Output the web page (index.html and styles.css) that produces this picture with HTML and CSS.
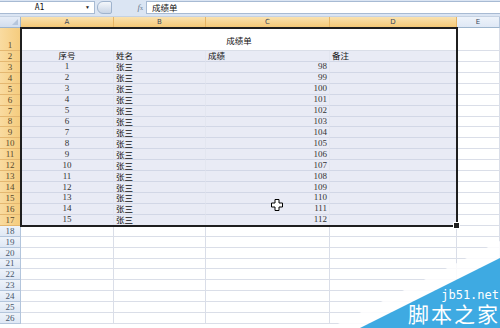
FILE: index.html
```html
<!DOCTYPE html>
<html lang="zh-CN">
<head>
    <meta charset="UTF-8">
    <meta name="viewport" content="width=device-width, initial-scale=1.0">
    <title>成绩单</title>
    <link rel="stylesheet" href="styles.css">
</head>
<body>
    <div class="formula-bar">
        <div class="name-box">
            <span class="name">A1</span>
            <span class="drop">&#9660;</span>
        </div>
        <div class="knob"></div>
        <div class="fx"><i>f</i><small>x</small></div>
        <div class="formula">成绩单</div>
    </div>

    <div class="sheet-wrap">
        <div id="sheet" class="sheet"></div>
        <!-- selection frame over A1:D17 -->
        <div class="selection"><span class="handle"></span></div>
        <svg class="cursor" width="12" height="12" viewBox="0 0 12 12">
            <path d="M4 0.5h4v3.5h3.5v4h-3.5v3.5h-4v-3.5h-3.5v-4h3.5z" fill="#fff" stroke="#000" stroke-width="1"/>
        </svg>
    </div>

    <div class="watermark">
        <svg width="170" height="90" viewBox="0 0 170 90">
            <polygon points="0,90 170,3 170,20 30,90" fill="#ffffff" fill-opacity="0.85"/>
            <polygon points="30,90 170,20 170,90" fill="#3eaae2"/>
        </svg>
        <div class="wm-url">jb51.net</div>
        <div class="wm-name">脚本之家</div>
    </div>

    <script>
        const sheet = document.getElementById('sheet');
        const letters = ['A', 'B', 'C', 'D', 'E'];
        let html = '<div class="corner"><span></span></div>';

        letters.forEach((l, i) => {
            html += `<div class="col-head ${i < 4 ? 'sel' : ''}">${l}</div>`;
        });

        // row 1 - merged title
        html += '<div class="row-head sel tall">1</div>';
        html += '<div class="title">成绩单</div>';
        html += '<div class="cell tall"></div>';

        // row 2 - headers
        html += `<div class="row-head sel">2</div>
            <div class="cell fill center">序号</div>
            <div class="cell fill">姓名</div>
            <div class="cell fill">成绩</div>
            <div class="cell fill">备注</div>
            <div class="cell"></div>`;

        for (let i = 1; i <= 15; i++) {
            html += `<div class="row-head sel">${i + 2}</div>
                <div class="cell fill center num">${i}</div>
                <div class="cell fill">张三</div>
                <div class="cell fill right num">${97 + i}</div>
                <div class="cell fill"></div>
                <div class="cell"></div>`;
        }

        for (let r = 18; r <= 26; r++) {
            html += `<div class="row-head">${r}</div>`;
            for (let c = 0; c < 5; c++) html += '<div class="cell"></div>';
        }

        sheet.innerHTML = html;
    </script>
</body>
</html>
```

FILE: styles.css
```css
body {
    margin: 0;
    width: 500px;
    height: 328px;
    overflow: hidden;
    background: #fff;
    font-family: "Liberation Serif", "Noto Sans CJK SC", serif;
    font-size: 9px;
    color: #111;
    position: relative;
}
.formula-bar {
    height: 17px;
    background: #dbe5f3;
    display: flex;
    align-items: flex-start;
    padding-top: 1px;
    box-sizing: border-box;
    border-bottom: 1px solid #c5d2e3;
}
.name-box {
    width: 95px;
    height: 13px;
    background: #fff;
    border: 1px solid #a7bad3;
    border-left: none;
    box-sizing: border-box;
    display: flex;
    align-items: center;
}
.name-box .name {
    flex: 1;
    text-align: center;
    font-family: "DejaVu Sans Mono", monospace;
    font-size: 8px;
    padding-right: 6px;
}
.name-box .drop {
    font-size: 5px;
    color: #222;
    margin-right: 4px;
}
.knob {
    width: 13px;
    height: 11px;
    margin: 0 0 0 2px;
    border-radius: 6px 2px 2px 6px;
    background: linear-gradient(#f4f7fb, #c9d5e6);
    border: 1px solid #9fb3cd;
}
.fx {
    width: 34px;
    text-align: right;
    padding-right: 3px;
    box-sizing: border-box;
    color: #6b7b8f;
    font-family: "Liberation Serif", serif;
    font-size: 9px;
    line-height: 12px;
}
.fx small {
    font-size: 6px;
}
.formula {
    flex: 1;
    height: 13px;
    background: #fff;
    border: 1px solid #a7bad3;
    border-right: none;
    box-sizing: border-box;
    padding-left: 5px;
    font-family: "Noto Sans CJK SC", sans-serif;
    font-size: 8.5px;
    line-height: 11px;
}
.sheet-wrap {
    position: relative;
}
.sheet {
    display: grid;
    grid-template-columns: 21px 93px 92px 124px 127px 1fr;
    grid-template-rows: 11px 23px;
    grid-auto-rows: 10.93px;
}
.corner {
    background: linear-gradient(#e6edf7, #d2deee);
    border-right: 1px solid #9eb6ce;
    border-bottom: 1px solid #9eb6ce;
    box-sizing: border-box;
    position: relative;
}
.corner span {
    position: absolute;
    right: 2px;
    bottom: 2px;
    border-left: 6px solid transparent;
    border-bottom: 6px solid #b6c6dc;
}
.col-head, .row-head {
    box-sizing: border-box;
    font-family: "DejaVu Sans", sans-serif;
    font-size: 7px;
    line-height: 8px;
    color: #3c4a5c;
    display: flex;
    justify-content: center;
    background: linear-gradient(#eef3fa, #dfe8f5);
    border-right: 1px solid #b3c5dc;
    border-bottom: 1px solid #b3c5dc;
}
.col-head {
    align-items: center;
    border-bottom-color: #9eb6ce;
}
.row-head {
    align-items: flex-end;
    font-family: "Liberation Serif", serif;
    font-size: 9px;
    line-height: 9px;
    color: #49586b;
}
.col-head.sel {
    background: linear-gradient(#fae2b0, #f5c977);
    border-right-color: #e7b665;
    border-bottom-color: #c3944a;
}
.row-head.sel {
    background: linear-gradient(90deg, #f9dba0, #f5cc7e);
    border-right-color: #c3944a;
    border-bottom-color: #e4b770;
    color: #5a4a2c;
}
.cell {
    box-sizing: border-box;
    border-right: 1px solid #dadee8;
    border-bottom: 1px solid #dadee8;
    font-family: "Noto Sans CJK SC", sans-serif;
    font-size: 8.5px;
    line-height: 9px;
    padding: 0 2px;
    white-space: nowrap;
    display: flex;
    align-items: center;
}
.cell.fill {
    background: #e9ebf5;
    border-bottom-color: #d2d7e6;
    border-right-color: #e3e6f0;
}
.cell.center {
    justify-content: center;
}
.cell.right {
    justify-content: flex-end;
}
.cell.num {
    font-family: "Liberation Serif", serif;
    font-size: 9px;
    color: #333;
}
.title {
    grid-column: span 4;
    display: flex;
    align-items: center;
    justify-content: center;
    font-family: "Noto Sans CJK SC", sans-serif;
    font-size: 8.5px;
    line-height: 9px;
    border-bottom: 1px solid #dadee8;
    padding-top: 2px;
}
.selection {
    position: absolute;
    left: 20px;
    top: 10px;
    width: 438px;
    height: 200px;
    border: 2px solid #1f1f1f;
    box-sizing: border-box;
    pointer-events: none;
}
.handle {
    position: absolute;
    right: -4px;
    bottom: -4px;
    width: 5px;
    height: 5px;
    background: #1f1f1f;
    border: 1px solid #fff;
}
.cursor {
    position: absolute;
    left: 271px;
    top: 182px;
}
.watermark {
    position: absolute;
    right: 0;
    bottom: 0;
    width: 170px;
    height: 90px;
    color: #fff;
}
.watermark svg {
    position: absolute;
    left: 0;
    top: 0;
}
.wm-url {
    position: absolute;
    right: 1px;
    bottom: 27px;
    font-family: "DejaVu Sans Mono", monospace;
    font-size: 12px;
    line-height: 12px;
}
.wm-name {
    position: absolute;
    right: 0;
    bottom: 4px;
    font-family: "Noto Sans CJK SC", sans-serif;
    font-size: 21px;
    line-height: 21px;
    letter-spacing: 2px;
}
```
